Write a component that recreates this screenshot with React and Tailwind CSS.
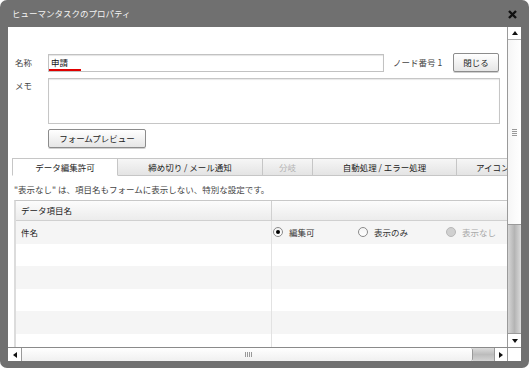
import React from "react";

const font = { fontFamily: '"Noto Sans CJK JP", "Noto Sans", sans-serif' };

function Btn({ children, className = "" }) {
  return (
    <div
      className={
        "flex items-center justify-center border border-[#8c8c8c] rounded-[2px] bg-gradient-to-b from-white to-[#e6e6e6] text-[8.5px] text-[#222] shadow-[0_1px_0_#d0d0d0] " +
        className
      }
    >
      {children}
    </div>
  );
}

function Tab({ children, active, disabled, className = "" }) {
  return (
    <div
      className={
        "h-[18px] shrink-0 flex items-center justify-center border border-[#c6c6c6] " +
        (active
          ? "bg-white border-b-white "
          : "bg-gradient-to-b from-[#f6f6f6] to-[#e4e4e4] ") +
        (disabled ? "text-[#b4b4b4] " : "text-[#222] ") +
        className
      }
    >
      {children}
    </div>
  );
}

function Radio({ checked, disabled, label, className = "" }) {
  return (
    <div className={"flex items-center gap-[6px] " + className}>
      <span
        className={
          "w-[10px] h-[10px] rounded-full border flex items-center justify-center " +
          (disabled
            ? "border-[#b8b8b8] bg-[#d0d0d0]"
            : "border-[#8a8a8a] bg-gradient-to-b from-[#f4f4f4] to-white")
        }
      >
        {checked && <span className="w-[4px] h-[4px] rounded-full bg-black" />}
      </span>
      <span className={disabled ? "text-[#a8a8a8]" : "text-[#333]"}>{label}</span>
    </div>
  );
}

function Arrow({ dir }) {
  const pts = {
    up: "1,5 4,1 7,5",
    down: "1,1 4,5 7,1",
    left: "5,1 1,4 5,7",
    right: "1,1 5,4 1,7",
  }[dir];
  const vert = dir === "up" || dir === "down";
  return (
    <svg width={vert ? 8 : 6} height={vert ? 6 : 8} viewBox={vert ? "0 0 8 6" : "0 0 6 8"}>
      <polygon points={pts} fill="#111" />
    </svg>
  );
}

export default function App() {
  const rows = [0, 1, 2, 3, 4, 5];
  return (
    <div className="w-[531px] h-[370px] bg-white" style={font}>
      <div className="w-[529px] h-[368px] rounded-[7px] bg-[#707070] flex flex-col px-[8px] pb-[7px]">
        {/* title bar */}
        <div className="h-[27px] shrink-0 flex items-center justify-between pl-[4px] pr-[4px]">
          <span className="text-[8.5px] text-[#f4f4f4]">ヒューマンタスクのプロパティ</span>
          <svg width="9" height="9" viewBox="0 0 9 9" className="mt-[1px]">
            <path d="M1 1 L8 8 M8 1 L1 8" stroke="#111" strokeWidth="2.4" />
          </svg>
        </div>

        {/* content */}
        <div className="flex-1 min-h-0 bg-white flex flex-col">
          <div className="flex-1 flex min-h-0">
            {/* main area */}
            <div className="flex-1 min-h-0 overflow-hidden text-[8.5px] text-[#333]">
              <div className="w-[600px] flex flex-col">
                {/* name row */}
                <div className="flex items-center mt-[26px] pl-[7px]">
                  <span className="w-[33px] text-[#444]">名称</span>
                  <div className="w-[336px] h-[18px] border border-[#c2c2c2] shadow-[inset_0_1px_1px_#e4e4e4] flex items-center pl-[2px] relative">
                    <span className="text-[#111]">申請</span>
                    <span className="absolute left-[0px] top-[14px] w-[32px] h-[2px] bg-[#e00000]" />
                  </div>
                  <span className="ml-[9px] w-[60px] text-[#444]">ノード番号 1</span>
                  <Btn className="w-[46px] h-[19px]">閉じる</Btn>
                </div>

                {/* memo */}
                <div className="flex mt-[6px] pl-[7px]">
                  <span className="w-[33px] pt-[1px] text-[#444]">メモ</span>
                  <div className="w-[452px] h-[46px] border border-[#c6c6c6] shadow-[inset_0_1px_1px_#e8e8e8]" />
                </div>

                {/* preview button */}
                <div className="pl-[40px] mt-[5px]">
                  <Btn className="w-[98px] h-[19px]">フォームプレビュー</Btn>
                </div>

                {/* tabs */}
                <div className="flex mt-[10px] pl-[4px]">
                  <Tab active className="w-[106px]">データ編集許可</Tab>
                  <Tab className="w-[145px] border-l-0">締め切り / メール通知</Tab>
                  <Tab disabled className="w-[50px] border-l-0">分岐</Tab>
                  <Tab className="w-[144px] border-l-0">自動処理 / エラー処理</Tab>
                  <Tab className="w-[100px] border-l-0 justify-start pl-[19px]">アイコン</Tab>
                </div>

                {/* note */}
                <div className="pl-[6px] mt-[7px] h-[12px] flex items-center text-[#444]">
                  "表示なし" は、項目名もフォームに表示しない、特別な設定です。
                </div>

                {/* table */}
                <div className="ml-[6px] mt-[5px] w-[560px] border-l-[2px] border-l-[#dcdcdc] border-t border-t-[#c8c8c8]">
                  <div className="flex h-[20px] border-b border-[#d0d0d0] bg-gradient-to-b from-[#fcfcfc] to-[#ececec]">
                    <div className="w-[256px] flex items-center pl-[5px] border-r border-[#d0d0d0] text-[#222]">データ項目名</div>
                    <div className="flex-1" />
                  </div>
                  {rows.map((i) => (
                    <div key={i} className={"flex h-[22.5px] " + (i % 2 === 0 ? "bg-[#f5f5f5]" : "bg-white")}>
                      <div className="w-[256px] flex items-center pl-[5px] border-r border-[#e2e2e2] text-[#222]">
                        {i === 0 ? "件名" : ""}
                      </div>
                      {i === 0 && (
                        <div className="flex items-center pl-[1px]">
                          <Radio checked label="編集可" className="w-[85px]" />
                          <Radio label="表示のみ" className="w-[88px]" />
                          <Radio disabled label="表示なし" />
                        </div>
                      )}
                    </div>
                  ))}
                </div>
              </div>
            </div>

            {/* vertical scrollbar */}
            <div className="w-[14px] shrink-0 flex flex-col border-l border-[#9a9a9a]">
              <div className="h-[13px] shrink-0 flex items-center justify-center bg-white border-b border-[#b0b0b0]">
                <Arrow dir="up" />
              </div>
              <div className="h-[185px] shrink-0 bg-gradient-to-r from-[#f6f6f6] to-white border-b border-[#9a9a9a] flex items-center justify-center">
                <div className="flex flex-col gap-[1px]">
                  <span className="w-[5px] h-px bg-[#999]" />
                  <span className="w-[5px] h-px bg-[#999]" />
                  <span className="w-[5px] h-px bg-[#999]" />
                  <span className="w-[5px] h-px bg-[#999]" />
                </div>
              </div>
              <div className="flex-1 bg-gradient-to-r from-[#d6d6d6] via-[#b4b4b4] to-[#dadada]" />
              <div className="h-[14px] shrink-0 flex items-center justify-center bg-white border-t border-[#9a9a9a]">
                <Arrow dir="down" />
              </div>
            </div>
          </div>

          {/* horizontal scrollbar */}
          <div className="h-[14px] shrink-0 flex border-t border-[#8a8a8a]">
            <div className="w-[14px] flex items-center justify-center bg-white border-r border-[#9a9a9a]">
              <Arrow dir="left" />
            </div>
            <div className="w-[451px] bg-gradient-to-b from-white to-[#f0f0f0] border-r border-[#9a9a9a] rounded-r-[2px] flex items-center justify-center">
              <div className="flex gap-[1px] ml-[2px]">
                <span className="w-px h-[5px] bg-[#999]" />
                <span className="w-px h-[5px] bg-[#999]" />
                <span className="w-px h-[5px] bg-[#999]" />
                <span className="w-px h-[5px] bg-[#999]" />
              </div>
            </div>
            <div className="flex-1 bg-gradient-to-b from-[#dcdcdc] via-[#bcbcbc] to-[#d4d4d4]" />
            <div className="w-[13px] flex items-center justify-center bg-white border-l border-[#9a9a9a]">
              <Arrow dir="right" />
            </div>
            <div className="w-[14px] bg-white border-l border-[#9a9a9a]" />
          </div>
        </div>
      </div>
    </div>
  );
}
